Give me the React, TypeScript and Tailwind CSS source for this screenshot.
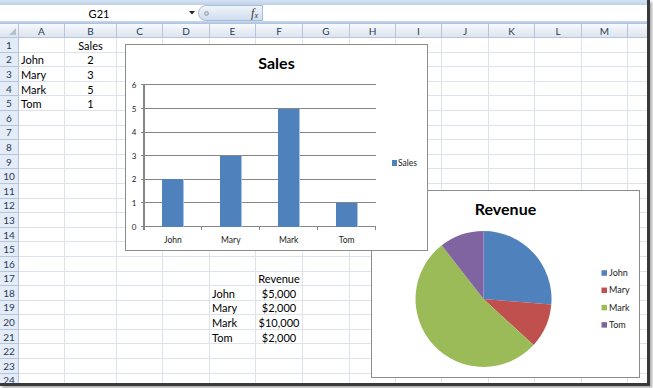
import React from 'react';

const COLS = ['A', 'B', 'C', 'D', 'E', 'F', 'G', 'H', 'I', 'J', 'K', 'L', 'M'];
const COL_W = [
  'w-[46px]', 'w-[52px]', 'w-[46px]', 'w-[47px]', 'w-[46px]', 'w-[47px]', 'w-[47px]',
  'w-[46px]', 'w-[46px]', 'w-[47px]', 'w-[46px]', 'w-[47px]', 'w-[46px]',
];

// cell values, keyed by address
const CELLS: Record<string, { text: string; center?: boolean }> = {
  B1: { text: 'Sales', center: true },
  A2: { text: 'John' }, B2: { text: '2', center: true },
  A3: { text: 'Mary' }, B3: { text: '3', center: true },
  A4: { text: 'Mark' }, B4: { text: '5', center: true },
  A5: { text: 'Tom' }, B5: { text: '1', center: true },
  F17: { text: 'Revenue', center: true },
  E18: { text: 'John' }, F18: { text: '$5,000', center: true },
  E19: { text: 'Mary' }, F19: { text: '$2,000', center: true },
  E20: { text: 'Mark' }, F20: { text: '$10,000', center: true },
  E21: { text: 'Tom' }, F21: { text: '$2,000', center: true },
};

const SALES = [
  { name: 'John', value: 2 },
  { name: 'Mary', value: 3 },
  { name: 'Mark', value: 5 },
  { name: 'Tom', value: 1 },
];

const REVENUE = [
  { name: 'John', value: 5000, color: '#4f81bd' },
  { name: 'Mary', value: 2000, color: '#c0504d' },
  { name: 'Mark', value: 10000, color: '#9bbb59' },
  { name: 'Tom', value: 2000, color: '#8064a2' },
];

function FormulaBar() {
  return (
    <>
      <div className="h-[5px] bg-gradient-to-b from-[#d6e3f3] to-[#bcd1ea]" />
      <div className="h-[16px] flex bg-white">
        <div className="w-[198px] relative flex items-center justify-center text-[11px] leading-none">
          G21
          <svg className="absolute right-[3px] top-[6px]" width="6" height="4" viewBox="0 0 6 4">
            <polygon points="0,0 6,0 3,3.5" fill="#222" />
          </svg>
        </div>
        <div className="w-[65px] flex items-center justify-between pl-[5px] pr-[4px] rounded-l-full border border-[#a9bcd6] bg-gradient-to-b from-[#f1f5fb] to-[#cfdcee]">
          <span className="w-[5px] h-[5px] rounded-full bg-[#c7cdd6] border border-[#9aa5b5]" />
          <span className="font-['Liberation_Serif',serif] italic text-[12px] leading-none text-[#333]">
            f<span className="text-[8px] relative top-[1px]">x</span>
          </span>
        </div>
        <div className="flex-1 bg-white" />
      </div>
      <div className="h-[3px] bg-gradient-to-b from-[#c9d9ee] to-[#a9c1de]" />
    </>
  );
}

function HeaderRow() {
  return (
    <div className="h-[14px] flex bg-gradient-to-b from-[#f7f9fc] to-[#dbe3ee] text-[10px] leading-none text-[#2a3b57]">
      <div className="w-[19px] border-r border-b border-[#b6c5d9] relative">
        <svg className="absolute right-[2px] bottom-[2px]" width="7" height="7" viewBox="0 0 7 7">
          <polygon points="7,0 7,7 0,7" fill="#b5bfcd" />
        </svg>
      </div>
      {COLS.map((c, i) => (
        <div key={c} className={`${COL_W[i]} border-r border-b border-[#b6c5d9] flex items-center justify-center`}>
          {c}
        </div>
      ))}
      <div className="flex-1 border-b border-[#b6c5d9]" />
    </div>
  );
}

function Row({ n }: { n: number }) {
  return (
    <div className="h-[14.6px] flex text-[11px] leading-none">
      <div className="w-[19px] bg-[#e4ecf7] border-r border-b border-[#b6c5d9] flex items-center justify-center text-[10px] text-[#2a3b57]">
        {n}
      </div>
      {COLS.map((c, i) => {
        const cell = CELLS[`${c}${n}`];
        return (
          <div
            key={c}
            className={`${COL_W[i]} border-r border-b border-[#dde2eb] flex items-center pt-[1px] whitespace-nowrap ${cell?.center ? 'justify-center' : 'pl-[2px]'}`}
          >
            {cell?.text}
          </div>
        );
      })}
      <div className="flex-1 border-b border-[#dde2eb]" />
    </div>
  );
}

function SalesChart() {
  const base = 182.5;
  const step = 23.6;
  const left = 19;
  const right = 250.5;
  const cat = (right - left) / 4;
  return (
    <div className="absolute left-[125px] top-[44px] z-10 w-[303px] h-[207px] bg-white border border-[#8c8c8c] flex flex-col">
      <div className="h-[36px] flex items-center justify-center font-bold text-[16px] leading-none">Sales</div>
      <svg width="301" height="169" viewBox="1 37 301 169" shapeRendering="crispEdges">
        {[0, 1, 2, 3, 4, 5, 6].map(v => (
          <g key={v}>
            <line x1={left - 3} x2={right} y1={base - v * step} y2={base - v * step} stroke="#868686" />
            <text x="9" y={base - v * step + 3} fontSize="8" textAnchor="middle" fill="#222" shapeRendering="auto">
              {v}
            </text>
          </g>
        ))}
        <line x1={left} x2={left} y1={base - 6 * step} y2={base + 3} stroke="#868686" strokeWidth="1.5" />
        {[1, 2, 3, 4].map(i => (
          <line key={i} x1={left + cat * i} x2={left + cat * i} y1={base} y2={base + 3} stroke="#868686" />
        ))}
        {SALES.map((s, i) => {
          const cx = left + cat * (i + 0.5);
          return (
            <g key={s.name}>
              <rect x={cx - 11} y={base - s.value * step} width="22" height={s.value * step} fill="#4f81bd" />
              <rect x={cx + 10.5} y={base - s.value * step} width="1" height={s.value * step} fill="#a9c3e3" />
              <text x={cx} y="198.5" fontSize="8.5" textAnchor="middle" fill="#222" shapeRendering="auto">
                {s.name}
              </text>
            </g>
          );
        })}
        <rect x="266.5" y="116" width="5.5" height="5.5" fill="#4f81bd" />
        <text x="273" y="122" fontSize="8.5" fill="#222" shapeRendering="auto">Sales</text>
      </svg>
    </div>
  );
}

function RevenueChart() {
  const cx = 112.5;
  const cy = 109;
  const r = 68;
  const total = REVENUE.reduce((a, b) => a + b.value, 0);
  let acc = 0;
  const pt = (f: number) => {
    const a = f * Math.PI * 2;
    return `${(cx + r * Math.sin(a)).toFixed(2)},${(cy - r * Math.cos(a)).toFixed(2)}`;
  };
  return (
    <div className="absolute left-[371px] top-[190px] w-[269px] h-[188px] bg-white border border-[#8c8c8c] flex flex-col">
      <div className="h-[36px] flex items-center justify-center font-bold text-[16px] leading-none">Revenue</div>
      <svg width="267" height="150" viewBox="1 37 267 150">
        {REVENUE.map(s => {
          const f0 = acc / total;
          acc += s.value;
          const f1 = acc / total;
          const large = f1 - f0 > 0.5 ? 1 : 0;
          return (
            <path
              key={s.name}
              d={`M${cx},${cy} L${pt(f0)} A${r},${r} 0 ${large} 1 ${pt(f1)} Z`}
              fill={s.color}
            />
          );
        })}
        {REVENUE.map((s, i) => {
          const y = 83 + i * 17.3;
          return (
            <g key={s.name}>
              <rect x="230.5" y={y - 2.75} width="5.5" height="5.5" fill={s.color} />
              <text x="238" y={y + 3} fontSize="9" fill="#222">{s.name}</text>
            </g>
          );
        })}
      </svg>
    </div>
  );
}

export default function App() {
  return (
    <div className="w-[653px] h-[388px] bg-white overflow-hidden">
      <div className="relative w-[650px] h-[386px] overflow-hidden bg-white border-r-[3px] border-b-[3px] border-[#3a3a3a] shadow-[2px_2px_3px_rgba(0,0,0,0.35)] font-['Lato',sans-serif] text-black">
        <FormulaBar />
        <HeaderRow />
        {Array.from({ length: 24 }, (_, i) => (
          <Row key={i} n={i + 1} />
        ))}
        <SalesChart />
        <RevenueChart />
      </div>
    </div>
  );
}
